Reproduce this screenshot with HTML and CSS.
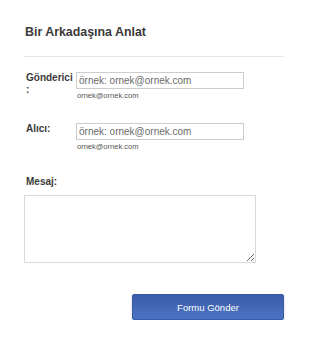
FILE: index.html
```html
<!DOCTYPE html>
<html lang="tr">
<head>
<meta charset="utf-8">
<title>Bir Arkadaşına Anlat</title>
<link rel="stylesheet" href="styles.css">
</head>
<body>
<div class="card">
  <h2 class="title">Bir Arkadaşına Anlat</h2>
  <form class="form">
    <div class="field">
      <label class="label" for="from">Gönderici :</label>
      <div class="control">
        <input class="input" id="from" type="text" placeholder="örnek: ornek@ornek.com">
        <div class="hint">ornek@ornek.com</div>
      </div>
    </div>
    <div class="field field-to">
      <label class="label" for="to">Alıcı:</label>
      <div class="control">
        <input class="input" id="to" type="text" placeholder="örnek: ornek@ornek.com">
        <div class="hint">ornek@ornek.com</div>
      </div>
    </div>
    <div class="message">
      <label class="label label-msg" for="msg">Mesaj:</label>
      <textarea class="textarea" id="msg"></textarea>
    </div>
    <div class="actions">
      <button class="submit" type="button">Formu Gönder</button>
    </div>
  </form>
</div>
</body>
</html>
```
FILE: styles.css
```css
html, body {
  margin: 0;
  padding: 0;
  background: #ffffff;
}
body {
  font-family: "Liberation Sans", Arial, sans-serif;
  color: #333333;
}
.card {
  width: 260px;
  padding: 0 0 0 24px;
}
.title {
  margin: 25px 0 0 0;
  padding: 0 0 16px 1px;
  font-size: 12.4px;
  line-height: 15px;
  font-weight: bold;
  color: #3a3a3a;
  border-bottom: 1px solid #e6e6e6;
}
.form {
  margin: 0;
}
.field {
  display: flex;
  margin-top: 15px;
}
.field-to {
  margin-top: 23px;
}
.label {
  display: block;
  width: 48px;
  margin-left: 2px;
  padding-top: 0;
  font-size: 10px;
  line-height: 12px;
  font-weight: bold;
  color: #3a3a3a;
}
.control {
  margin-left: 2px;
}
.input {
  display: block;
  box-sizing: border-box;
  width: 168px;
  height: 17px;
  margin: 0;
  padding: 0 2px;
  border: 1px solid #cccccc;
  border-radius: 0;
  font-family: "Liberation Sans", Arial, sans-serif;
  font-size: 10px;
  color: #555555;
  outline: none;
}
.input::placeholder {
  color: #6b6b6b;
  opacity: 1;
}
.hint {
  margin: 2px 0 0 1px;
  font-size: 7.5px;
  line-height: 9px;
  color: #555555;
}
.message {
  margin-top: 25px;
}
.label-msg {
  width: auto;
  margin-left: 2px;
}
.textarea {
  display: block;
  box-sizing: border-box;
  width: 232px;
  height: 68px;
  margin: 7px 0 0 0;
  padding: 2px;
  border: 1px solid #d9d9d9;
  border-radius: 0;
  resize: both;
  font-family: "Liberation Sans", Arial, sans-serif;
  font-size: 10px;
}
.actions {
  display: flex;
  justify-content: flex-end;
  margin-top: 31px;
}
.submit {
  width: 152px;
  height: 26px;
  margin: 0;
  padding: 0;
  border: 1px solid #3a5aa6;
  border-radius: 2px;
  background: linear-gradient(#3b5ca9, #4b73c3);
  box-shadow: 0 1px 2px rgba(0, 0, 0, 0.25);
  font-family: "Liberation Sans", Arial, sans-serif;
  font-size: 9.5px;
  color: #ffffff;
  cursor: pointer;
}
```
